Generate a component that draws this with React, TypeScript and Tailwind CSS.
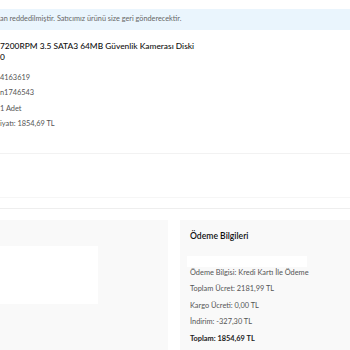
export default function App() {
  const rows = ['4163619', 'n1746543', '1 Adet', 'iyatı: 1854,69 TL'];

  return (
    <div className="w-[350px] h-[350px] overflow-hidden bg-white font-['Lato',sans-serif] text-[#333]">
      <div className="pt-[9px]">
        <div className="h-[21px] bg-[#eaf5fd] flex items-center text-[7.3px] text-[#666]">
          an reddedilmiştir. Satıcımız ürünü size geri gönderecektir.
        </div>
      </div>

      <div className="pt-[11px] w-[199px]">
        <h2 className="text-[8.4px] leading-[11px] text-[#111] font-medium">
          7200RPM 3.5 SATA3 64MB Güvenlik Kamerası Diski 0
        </h2>
        <div className="mt-[11px] flex flex-col gap-[7px] text-[7.4px] leading-[8.4px] text-[#555]">
          {rows.map((r) => (
            <p key={r}>{r}</p>
          ))}
        </div>
      </div>

      <div className="mt-[24px] border-t border-[#f2f2f2] h-[44px]" />
      <div className="border-t border-[#f6f6f6] h-[11px]" />
      <div className="border-t border-[#eeeeee] h-[12px]" />

      <div className="flex gap-[12px] h-[130px]">
        <div className="w-[168px] bg-[#f9f9f9] pt-[26px]">
          <div className="w-[98px] h-[58px] bg-white" />
        </div>
        <div className="flex-1 bg-[#f9f9f9] pl-[10px] pt-[11px]">
          <h3 className="text-[8.6px] leading-[10px] text-[#111] font-semibold">Ödeme Bilgileri</h3>
          <div className="-ml-[3px] mt-[15px] w-[120px] h-[11px] bg-white" />
          <div className="mt-[2px] flex flex-col gap-[8.6px] text-[7.4px] leading-[8px] text-[#555]">
            <p>Ödeme Bilgisi: Kredi Kartı İle Ödeme</p>
            <p>Toplam Ücret: 2181,99 TL</p>
            <p>Kargo Ücreti: 0,00 TL</p>
            <p>İndirim: -327,30 TL</p>
            <p className="font-bold text-[#222]">Toplam: 1854,69 TL</p>
          </div>
        </div>
      </div>
    </div>
  );
}
